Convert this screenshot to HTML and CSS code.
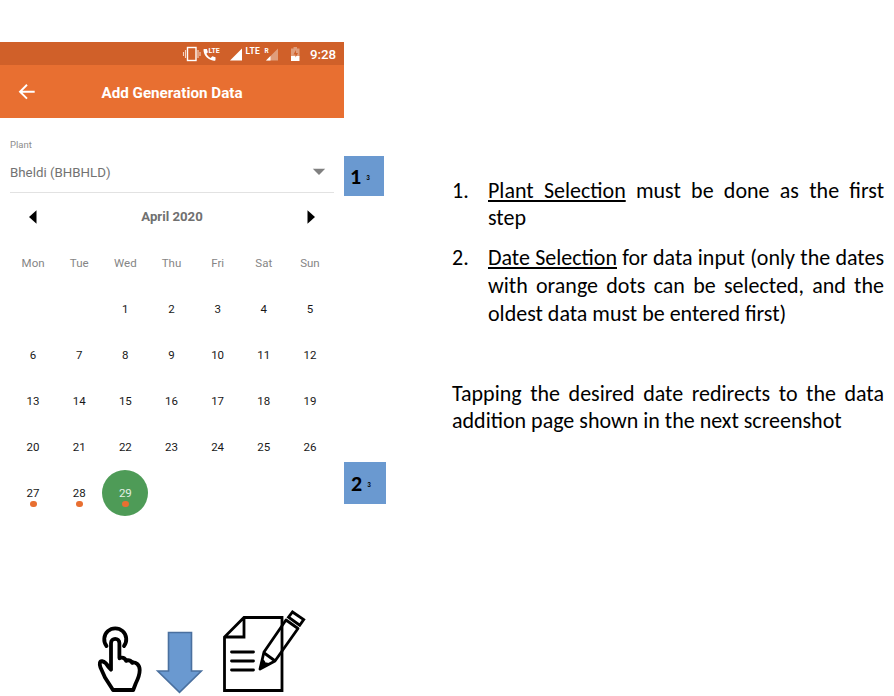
FILE: index.html
```
<!DOCTYPE html>
<html lang="en">
<head>
<meta charset="utf-8">
<title>Add Generation Data</title>
<link rel="stylesheet" href="styles.css">
</head>
<body>
<div class="page">
  <div class="left">
    <main class="phone">
      <div class="status">
        <svg class="status-icons" width="130" height="23" viewBox="180 0 130 23">
          <rect x="187.500" y="5.500" width="8.500" height="13" fill="none" stroke="#fff" stroke-width="1.400"/>
          <path d="M185.500 8v8M198 8v8M183.500 10v4M200 10v4" stroke="#f3d3c3" stroke-width="1.100"/>
          <path d="M204.300 7h2.600l1 3.200-1.500 1.500c1 2 2.400 3.300 4.300 4.200l1.600-1.700 3.200 1v2.600c0 .8-.6 1.200-1.500 1-5.800-.8-10.300-5-10.500-10.800 0-.6.200-1 .8-1z" fill="#fff"/>
          <text class="lte-small" x="208.500" y="10.500">LTE</text>
          <path d="M242 6.500v12h-12z" fill="#fff"/>
          <text class="lte" x="245.500" y="12">LTE</text>
          <text class="roam" x="264.500" y="11">R</text>
          <path d="M278 6.500v12h-12z" fill="#e09d7b"/>
          <path d="M270.500 14v4.500h-4.500z" fill="#fff"/>
          <path d="M293.500 5h3.500v1.500h2.500v8h-8.500v-8h2.500z" fill="#e09d7b"/>
          <path d="M291 14h8.500v5h-8.500z" fill="#fff"/>
          <path d="M296 8l-2.500 4.500h2v3l2.500-4.500h-2z" fill="#d06029"/>
        </svg>
        <span class="clock">9:28</span>
      </div>
      <header class="appbar">
        <svg class="back" width="18" height="18" viewBox="0 0 18 18"><path d="M16.700 8.700H2.500M9 1.800L2 8.700l7 6.900" fill="none" stroke="#fff" stroke-width="1.900"/></svg>
        <h1>Add Generation Data</h1>
      </header>
      <section class="field">
        <label>Plant</label>
        <div class="select"><span>Bheldi (BHBHLD)</span>
          <svg width="14" height="8" viewBox="0 0 14 8"><path d="M.8.800h12.400L7 7z" fill="#808080"/></svg>
        </div>
      </section>
      <section class="month">
        <svg width="10" height="14" viewBox="0 0 10 14"><path d="M8.500.300v13.400L1 7z"/></svg>
        <h2>April 2020</h2>
        <svg width="10" height="14" viewBox="0 0 10 14"><path d="M1.500.300v13.400L9 7z"/></svg>
      </section>
      <section class="calendar">
        <b>Mon</b><b>Tue</b><b>Wed</b><b>Thu</b><b>Fri</b><b>Sat</b><b>Sun</b>
        <i class="first">1</i><i>2</i><i>3</i><i>4</i><i>5</i>
        <i>6</i><i>7</i><i>8</i><i>9</i><i>10</i><i>11</i><i>12</i>
        <i>13</i><i>14</i><i>15</i><i>16</i><i>17</i><i>18</i><i>19</i>
        <i>20</i><i>21</i><i>22</i><i>23</i><i>24</i><i>25</i><i>26</i>
        <i class="dot">27</i><i class="dot">28</i><i class="dot today">29</i>
      </section>
    </main>
    <svg class="legend" width="220" height="90" viewBox="94 606 220 90">
      <g fill="none" stroke="#000" stroke-width="3.800" stroke-linecap="round" stroke-linejoin="round">
        <path d="M106.500 646a11 11 0 1 1 17.500 0"/>
        <path d="M113 690l-8-12.500-4.500-10c-1.400-4-.7-6.500 1.500-6.300 3.300.8 5.200 3.500 6.200 5.500l2.800 3V643c0-5.500 8.400-5.500 8.400 0V658c3.500-1 5.500 0 6.500 2.500 3-.8 5 .3 6 2 4-.5 7.800 2 7.800 7.500 0 5-2 9.500-4 13.500l-2.500 6.500z"/>
        <path d="M119.500 655v4M126.500 659.500v2M132.500 661.500v2" stroke-width="2.600"/>
      </g>
      <path d="M168.500 632.500h23v38.500h9.800l-21.800 21.300-21.800-21.300h10.800z" fill="#6a99d0" stroke="#4a709f" stroke-width="1.600"/>
      <g fill="none" stroke="#000" stroke-width="2.800">
        <path d="M282 617.500V690.500H224.500v-53.500l19.500-19.500zM224.500 637h19.500v-19.500"/>
        <path d="M231.500 652h22M231.500 661h22M231.500 670h22" stroke-linecap="round"/>
        <path d="M286 620l12 8.500-23 32.500-15 8 4-17z" stroke-linejoin="round"/>
        <path d="M263.500 652.500l11 8M292.500 612l11.200 7.600-4 5.600-11.200-8z"/>
      </g>
      <path d="M261.500 659c3 .5 3.500 2 4 3.500 2-.3 4 .5 5 2L259 670z"/>
    </svg>
  </div>
  <div class="markers">
    <div class="marker one">1<small>3</small></div>
    <div class="marker two">2<small>3</small></div>
  </div>
  <article class="notes">
    <ol>
      <li><span class="num">1.</span><p><span class="line"><u>Plant Selection</u> must be done as the first</span><span class="line last">step</span></p></li>
      <li><span class="num">2.</span><p><span class="line"><u>Date Selection</u> for data input (only the dates</span><span class="line">with orange dots can be selected, and the</span><span class="line last">oldest data must be entered first)</span></p></li>
    </ol>
    <p class="after"><span class="line">Tapping the desired date redirects to the data</span><span class="line last">addition page shown in the next screenshot</span></p>
  </article>
</div>
</body>
</html>
```
FILE: styles.css
```
* { box-sizing: border-box; margin: 0; padding: 0; }
body { background: #fff; font-family: Roboto, sans-serif; overflow: hidden; }
svg { display: block; flex: none; }
.page { display: grid; grid-template-columns: 344px 42px 1fr; height: 696px; }
.left { padding-top: 42px; }
.phone { width: 344px; height: 564px; }
.status { height: 23px; background: #d06029; display: flex; align-items: center; padding-left: 180px; color: #fff; }
.clock { font-size: 13.3px; font-weight: 500; line-height: 23px; padding-top: 1px; }
.status-icons text { fill: #fff; font-weight: 700; }
.lte-small { font-size: 7px; }
.lte { font-size: 8.5px; letter-spacing: .3px; }
.roam { font-size: 6.5px; }
.appbar { height: 53px; background: #e86f31; display: flex; align-items: center; justify-content: center; color: #fff; position: relative; }
.back { position: absolute; left: 18px; top: 18px; }
.appbar h1 { font-size: 15.2px; font-weight: 700; line-height: 20px; padding-top: 2px; }
.field { margin: 0 10px; height: 75px; padding-top: 20px; border-bottom: 1.5px solid #e2e2e2; }
.field label { display: block; font-size: 9.5px; line-height: 13px; color: #8d8d8d; }
.select { display: flex; justify-content: space-between; align-items: center; height: 20px; margin-top: 11px; padding-right: 8px; font-size: 13.3px; color: #727272; }
.month { height: 47px; padding: 0 28px; display: flex; justify-content: space-between; align-items: center; }
.month h2 { font-size: 13.2px; font-weight: 700; color: #707070; }
.calendar { margin-left: 10px; display: grid; grid-template-columns: repeat(7, 46.15px); grid-auto-rows: 46px; text-align: center; line-height: 46px; }
.calendar b { font-size: 11.5px; font-weight: 400; color: #858585; }
.calendar i { font-size: 11.5px; line-height: 47px; height: 46px; font-style: normal; color: #181818; position: relative; }
.calendar .first { grid-column: 3; }
.calendar .dot::after { content: ""; position: absolute; left: 20px; top: 30.5px; width: 6.5px; height: 6.5px; border-radius: 50%; background: #e86f31; }
.calendar .today { color: #e4f0e4; background: #4e9b57; border-radius: 50%; }
.legend { margin-left: 94px; }
.markers { padding-top: 156px; }
.marker { background: #6a99d0; display: flex; align-items: center; color: #000; font: 700 22px Carlito, Lato, sans-serif; padding: 0 0 0 6px; }
.marker small { font-size: 7px; font-weight: 700; margin-left: 5px; padding-top: 3px; }
.one { width: 40px; height: 40px; }
.two { width: 42px; height: 42px; margin-top: 266px; padding-left: 7px; }
.notes { padding: 176.6px 10px 0 66px; font-family: Carlito, Lato, sans-serif; font-size: 22px; line-height: 27.6px; color: #000; }
.notes ol { list-style: none; }
.notes li { display: grid; grid-template-columns: 36px 1fr; margin-bottom: 12.6px; }
.notes u { text-underline-offset: 2px; text-decoration-thickness: 1.5px; text-decoration-skip-ink: none; }
.line { display: block; white-space: nowrap; text-align: justify; text-align-last: justify; }
.line.last { text-align-last: left; }
.after { padding-top: 40px; }
```
